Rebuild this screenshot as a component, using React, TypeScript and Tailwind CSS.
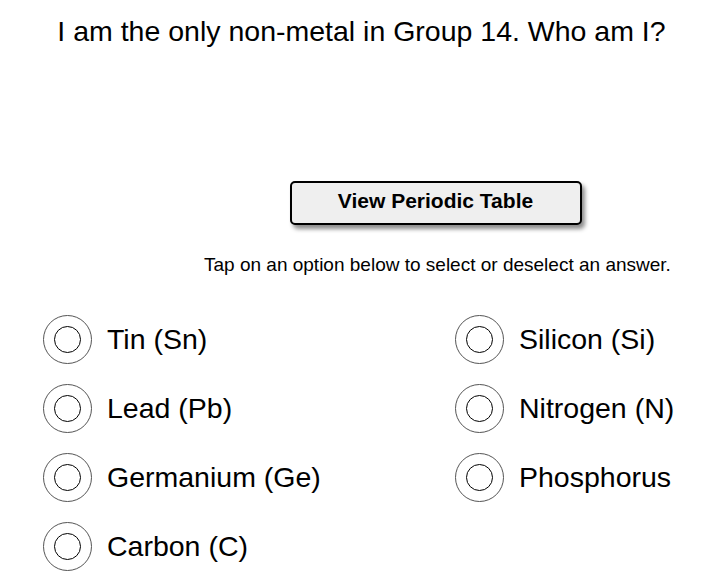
const left = ["Tin (Sn)", "Lead (Pb)", "Germanium (Ge)", "Carbon (C)"];
const right = ["Silicon (Si)", "Nitrogen (N)", "Phosphorus"];

function Option({ label }: { label: string }) {
  return (
    <div className="flex h-[69px] items-center">
      <div className="flex h-[49px] w-[49px] items-center justify-center rounded-full border border-[#555]">
        <div className="h-[27px] w-[27px] rounded-full border-[1.5px] border-black" />
      </div>
      <span className="ml-[15px] text-[28.5px] text-black">{label}</span>
    </div>
  );
}

export default function App() {
  return (
    <div
      className="h-[582px] w-[723px] overflow-hidden bg-white"
      style={{ fontFamily: '"Liberation Sans", Arial, sans-serif' }}
    >
      <h1 className="pt-[11px] text-center text-[28.5px] leading-[40px] text-black">
        I am the only non-metal in Group 14. Who am I?
      </h1>
      <div className="mt-[130px] flex justify-center pl-[148px]">
        <button className="h-[44px] w-[292px] rounded-[5px] border-2 border-black bg-[#efefef] pb-[4px] text-[21px] font-bold text-black shadow-[3px_4px_4px_rgba(0,0,0,0.45)]">
          View Periodic Table
        </button>
      </div>
      <p className="mt-[29px] pl-[204px] text-[19px] leading-[22px] text-black">
        Tap on an option below to select or deselect an answer.
      </p>
      <div className="mt-[29px] flex pl-[43px]">
        <div className="w-[412px]">
          {left.map((l) => (
            <Option key={l} label={l} />
          ))}
        </div>
        <div>
          {right.map((l) => (
            <Option key={l} label={l} />
          ))}
        </div>
      </div>
    </div>
  );
}
